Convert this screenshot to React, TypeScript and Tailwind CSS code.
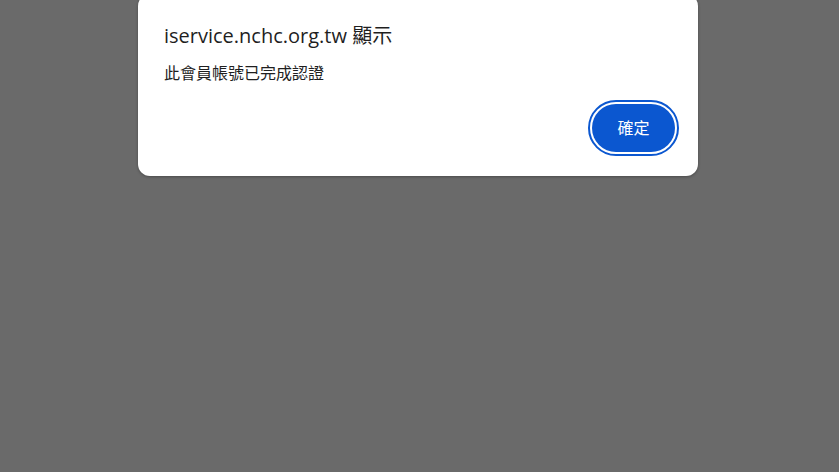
export default function App() {
  return (
    <div className="flex min-h-screen bg-[#6a6a6a] pl-[138px] font-['Segoe_UI','Open_Sans','Noto_Sans_CJK_TC',sans-serif]">
      <div className="-mt-[6px] h-[182px] w-[560px] rounded-[12px] bg-white px-[26px] pt-[28px] shadow-[0_1px_3px_rgba(0,0,0,0.3)]">
        {/* Title */}
        <h1 className="text-[20px] leading-[28px] text-[#1f1f1f]">
          iservice.nchc.org.tw 顯示
        </h1>

        {/* Message */}
        <p className="mt-[12px] text-[16px] leading-[22px] text-[#1f1f1f]">
          此會員帳號已完成認證
        </p>

        {/* Actions */}
        <div className="mt-[20px] flex justify-end">
          <button
            type="button"
            className="-mr-[3px] h-[48px] w-[83px] rounded-full bg-[#0b57d0] text-[16px] text-white outline-2 outline-offset-2 outline-[#0b57d0]"
          >
            確定
          </button>
        </div>
      </div>
    </div>
  );
}
